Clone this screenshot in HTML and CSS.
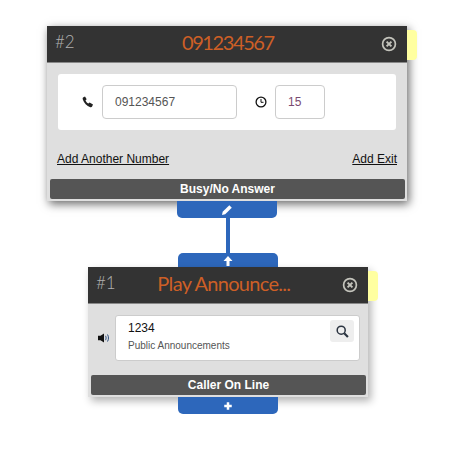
FILE: index.html
```html
<!DOCTYPE html>
<html lang="en">
<head>
  <meta charset="UTF-8">
  <title>Call Flow</title>
  <link rel="stylesheet" href="styles.css">
</head>
<body>
  <div class="flow">
    <!-- Nodo 2 -->
    <div class="node node-dial">
      <span class="note"></span>
      <div class="node-head">
        <span class="node-num">#2</span>
        <span class="node-title">091234567</span>
        <svg class="close-icon" viewBox="0 0 16 16">
          <circle cx="8" cy="8" r="6.4" fill="none" stroke="#c4c4bc" stroke-width="1.7"/>
          <path d="M5.6 5.6l4.8 4.8M10.4 5.6l-4.8 4.8" stroke="#c4c4bc" stroke-width="2"/>
        </svg>
      </div>
      <div class="node-body">
        <div class="panel dial-panel">
          <svg class="phone-icon" viewBox="0 0 12 12">
            <path d="M1 1.6L3 .6l1.7 2.7-1.200 1c.5 1.400 1.500 2.500 2.900 3.300l1.200-1L11 8.600l-.9 2c-.4.700-1 .9-1.800.6C4.800 10 2 7.200.8 3.500.5 2.700.6 2 1 1.600z" fill="#222"/>
          </svg>
          <div class="field field-number">091234567</div>
          <svg class="clock-icon" viewBox="0 0 12 12">
            <circle cx="6" cy="6" r="4.900" fill="none" stroke="#111" stroke-width="1.300"/>
            <path d="M6 3v3.300h2.500" fill="none" stroke="#111"/>
          </svg>
          <div class="field field-time">15</div>
        </div>
        <div class="links">
          <a href="#">Add Another Number</a>
          <a href="#">Add Exit</a>
        </div>
        <div class="exit-bar">Busy/No Answer</div>
      </div>
    </div>

    <div class="tab tab-bottom tab-a">
      <svg class="tab-icon tab-icon-big" viewBox="0 0 12 12">
        <path d="M8.300 1.200l2.500 2.500-6.600 6.600-3.200.7.700-3.200z" fill="#fff"/>
      </svg>
    </div>
    <div class="link-line"></div>
    <div class="tab tab-top">
      <svg class="tab-icon tab-icon-big" viewBox="0 0 12 12">
        <path d="M6 1l4.500 5H7.500v5h-3V6H1.500z" fill="#fff"/>
      </svg>
    </div>

    <!-- Nodo 1 -->
    <div class="node node-play">
      <span class="note"></span>
      <div class="node-head">
        <span class="node-num">#1</span>
        <span class="node-title">Play Announce...</span>
        <svg class="close-icon" viewBox="0 0 16 16">
          <circle cx="8" cy="8" r="6.400" fill="none" stroke="#c4c4bc" stroke-width="1.700"/>
          <path d="M5.600 5.600l4.800 4.800M10.400 5.600l-4.800 4.800" stroke="#c4c4bc" stroke-width="2"/>
        </svg>
      </div>
      <div class="node-body">
        <div class="play-row">
          <svg class="speaker-icon" viewBox="0 0 12 10">
            <path d="M0 2.800h2.500L6 .5v9L2.500 7.200H0z" fill="#111"/>
            <path d="M7.500 2.800c.8 1.400.8 3 0 4.400M9.500 1.500c1.300 2.200 1.300 4.800 0 7" fill="none" stroke="#2f5080"/>
          </svg>
          <div class="panel play-panel">
            <div class="play-text">
              <div class="play-name">1234</div>
              <div class="play-type">Public Announcements</div>
            </div>
            <div class="search-btn">
              <svg class="search-icon" viewBox="0 0 12 12">
                <circle cx="4.800" cy="4.800" r="3.700" fill="none" stroke="#2b3440" stroke-width="1.400"/>
                <path d="M7.600 7.600l3.400 3.400" stroke="#2b3440" stroke-width="2"/>
              </svg>
            </div>
          </div>
        </div>
        <div class="exit-bar">Caller On Line</div>
      </div>
    </div>

    <div class="tab tab-bottom tab-b">
      <svg class="tab-icon" viewBox="0 0 12 12">
        <path d="M4.500 1.500h3v3h3v3h-3v3h-3v-3h-3v-3h3z" fill="#fff"/>
      </svg>
    </div>
  </div>
</body>
</html>
```

FILE: styles.css
```css
body {
  margin: 0;
  background-color: #fff;
  font-family: "Liberation Sans", Arial, sans-serif;
}

.flow {
  padding-top: 26px;
}

.node {
  position: relative;
  background-color: #dfdfdf;
}

.node-dial {
  width: 360px;
  margin-left: 47px;
  box-shadow: 2px 3px 9px rgba(0, 0, 0, 0.6);
}

.node-play {
  width: 280px;
  margin-left: 88px;
  box-shadow: 3px 4px 8px rgba(0, 0, 0, 0.3);
}

.note {
  position: absolute;
  top: 4px;
  right: -10px;
  width: 10px;
  height: 30px;
  background-color: #ffffa0;
  border-radius: 0 4px 4px 0;
}

.node-head {
  display: flex;
  align-items: center;
  justify-content: space-between;
  height: 36px;
  padding: 0 10px 0 8px;
  background-color: #333;
  border-bottom: 1px solid #888;
}

.node-num {
  margin-bottom: 5px;
  font-family: Lato, sans-serif;
  font-size: 17px;
  font-weight: 300;
  color: #b0b0b0;
}

.node-title {
  margin-bottom: 5px;
  font-family: Lato, sans-serif;
  font-size: 20px;
  color: #cd5f26;
}

.node-dial .node-title {
  letter-spacing: -1.4px;
}

.node-play .node-title {
  margin-left: -10px;
  letter-spacing: -0.7px;
}

.close-icon {
  width: 16px;
  height: 16px;
}

.node-body {
  padding: 11px 2px 2px 3px;
}

.panel {
  background-color: #fff;
  border-radius: 3px;
}

.dial-panel {
  display: flex;
  align-items: center;
  height: 56px;
  margin: 0 9px 0 8px;
  padding-left: 24px;
}

.phone-icon {
  width: 12px;
  height: 12px;
  margin-right: 8px;
}

.clock-icon {
  width: 12px;
  height: 12px;
  margin: 0 8px 0 18px;
}

.field {
  display: flex;
  align-items: center;
  box-sizing: border-box;
  height: 34px;
  padding-left: 12px;
  border: 1px solid #ccc;
  border-radius: 4px;
  font-size: 12px;
  color: #555;
}

.field-number {
  width: 135px;
}

.field-time {
  width: 50px;
  color: #7a4a70;
}

.links {
  display: flex;
  justify-content: space-between;
  margin: 22px 8px 13px 7px;
  font-size: 12px;
  line-height: 14px;
}

.links a {
  color: #111;
}

.exit-bar {
  height: 20px;
  background-color: #555;
  border-radius: 2px;
  font-size: 12px;
  font-weight: bold;
  line-height: 20px;
  text-align: center;
  color: #fff;
}

.play-row {
  display: flex;
  align-items: center;
  margin-bottom: 14px;
}

.speaker-icon {
  width: 12px;
  height: 10px;
  margin: 0 5px 0 7px;
}

.play-panel {
  display: flex;
  justify-content: space-between;
  box-sizing: border-box;
  width: 245px;
  height: 46px;
  padding: 4px 5px 0 12px;
  border: 1px solid #ccc;
}

.play-name {
  font-size: 12px;
  line-height: 16px;
  color: #111;
}

.play-type {
  margin-top: 4px;
  font-size: 10px;
  color: #555;
}

.search-btn {
  display: flex;
  align-items: center;
  justify-content: center;
  width: 24px;
  height: 22px;
  background-color: #eee;
  border-radius: 3px;
}

.search-icon {
  width: 13px;
  height: 13px;
}

.tab {
  position: relative;
  display: flex;
  align-items: center;
  justify-content: center;
  width: 100px;
  background-color: #2d67bb;
}

.tab-bottom {
  height: 17px;
  border-radius: 0 0 5px 5px;
}

.tab-a {
  margin-left: 177px;
}

.tab-b {
  margin-left: 178px;
}

.tab-top {
  align-items: flex-end;
  height: 14px;
  margin-left: 178px;
  border-radius: 5px 5px 0 0;
}

.tab-icon {
  width: 10px;
  height: 10px;
}

.tab-icon-big {
  width: 12px;
  height: 12px;
}

.link-line {
  width: 4px;
  height: 35px;
  margin-left: 226px;
  background-color: #2d67bb;
}
```
